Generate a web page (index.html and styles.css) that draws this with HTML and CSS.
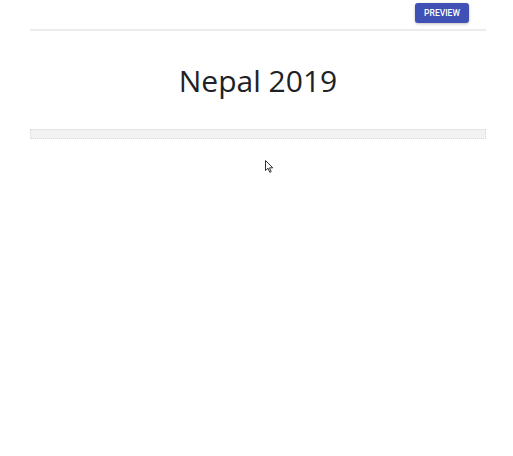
FILE: index.html
```html
<!DOCTYPE html>
<html>
<head>
<meta charset="utf-8">
<link rel="stylesheet" href="styles.css">
</head>
<body>
<div class="page">
  <header class="topbar">
    <button class="preview-btn">PREVIEW</button>
  </header>
  <h1 class="title">Nepal 2019</h1>
  <div class="placeholder"></div>
</div>
<svg class="cursor" width="10" height="14" viewBox="0 0 10 14">
  <path d="M0.5 0.5 L0.5 10.5 L3 8.2 L4.8 12.3 L6.2 11.7 L4.5 7.8 L7.8 7.8 Z" fill="#fff" stroke="#333" stroke-width="1"/>
</svg>
</body>
</html>
```
FILE: styles.css
```css
html, body {
  margin: 0;
  padding: 0;
  background: #ffffff;
}
body {
  font-family: "Open Sans", "Noto Sans", sans-serif;
  position: relative;
  width: 513px;
  height: 456px;
  overflow: hidden;
}
.page {
  width: 456px;
  margin-left: 30px;
}
.topbar {
  display: flex;
  justify-content: flex-end;
  padding-top: 3px;
  padding-right: 17px;
  height: 26px;
  border-bottom: 2px solid #ececec;
  box-sizing: content-box;
}
.preview-btn {
  width: 54px;
  height: 20px;
  background: #3f51b5;
  color: #ffffff;
  border: none;
  border-radius: 3px;
  font-family: Roboto, "Liberation Sans", Arial, sans-serif;
  font-size: 8.5px;
  font-weight: 500;
  padding: 0;
  box-shadow: 0 1px 3px rgba(0,0,0,0.25);
}
.title {
  margin: 30px 0 0 0;
  text-align: center;
  font-weight: 500;
  font-size: 30px;
  line-height: 40px;
  color: #1e2226;
}
.placeholder {
  margin-top: 28px;
  height: 8px;
  background: #f2f2f2;
  border: 1px dotted #d8d8d8;
}
.cursor {
  position: absolute;
  left: 265px;
  top: 160px;
}
```
